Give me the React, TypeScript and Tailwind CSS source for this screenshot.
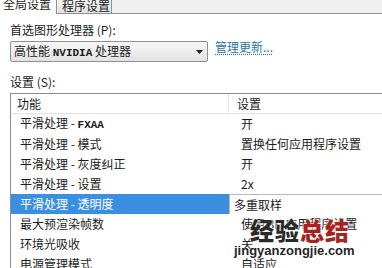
const CJK = "font-['Noto_Sans_CJK_SC','Noto_Sans',sans-serif]";

interface SettingRow {
  name: string;
  latin?: string;
  value: string;
}

const ROWS: SettingRow[] = [
  { name: "平滑处理 - ", latin: "FXAA", value: "开" },
  { name: "平滑处理 - 模式", value: "置换任何应用程序设置" },
  { name: "平滑处理 - 灰度纠正", value: "开" },
  { name: "平滑处理 - 设置", value: "2x" },
  { name: "平滑处理 - 透明度", value: "多重取样" },
  { name: "最大预渲染帧数", value: "使用 3D 应用程序设置" },
  { name: "环境光吸收", value: "关" },
  { name: "电源管理模式", value: "自适应" },
];

const SELECTED = 4;

function Tabs() {
  return (
    <div className="flex h-[14px] items-stretch bg-[#f0f0f0]">
      <div className="w-[56px] overflow-hidden bg-white pl-[3px] leading-[12px] -mt-[2px]">全局设置</div>
      <div className="w-[56px] overflow-hidden border-x border-b border-[#8e9196] bg-gradient-to-b from-[#f4f4f4] to-[#e2e2e2] pl-[5px] leading-[12px]">
        程序设置
      </div>
      <div className="flex-1 border-b border-[#8e9196]" />
    </div>
  );
}

function Dropdown() {
  return (
    <div className="flex items-start gap-[7px]">
      <div className="flex h-[21px] w-[198px] items-center justify-between rounded-[2px] border border-[#8d8f94] bg-gradient-to-b from-[#f6f6f6] to-[#e3e3e3] pl-[3px] pr-[4px]">
        <span>
          高性能 <span className="font-['Liberation_Mono',monospace] text-[11px] font-bold">NVIDIA</span> 处理器
        </span>
        <svg width="7" height="4" viewBox="0 0 7 4">
          <path d="M0 0h7L3.5 4z" fill="#222" />
        </svg>
      </div>
      <a className="mt-[-1px] text-[#2a78a6] underline decoration-dotted underline-offset-[2px] leading-[14px]">管理更新...</a>
    </div>
  );
}

function SettingsList() {
  return (
    <div className="border-l border-t border-[#8a8e96]">
      <div className="flex h-[20px] items-center border-b border-[#e3e3e3]">
        <div className="flex h-full w-[218px] items-center border-r border-[#e3e3e3] pl-[6px]">功能</div>
        <div className="pl-[8px]">设置</div>
      </div>
      {ROWS.map((r, i) => {
        const sel = i === SELECTED;
        return (
          <div key={r.name} className="flex h-[20px] items-center">
            <div
              className={
                sel
                  ? "flex h-full w-[218px] items-center bg-[#3b8fe0] pl-[9px] text-white"
                  : "flex h-full w-[218px] items-center pl-[9px]"
              }
            >
              <span className="whitespace-pre">
                {r.name}
                {r.latin && <span className="font-['Liberation_Mono',monospace] text-[11px] font-bold">{r.latin}</span>}
              </span>
            </div>
            {sel ? (
              <div className="flex h-full flex-1 items-center border-l border-t border-[#b9b9b9] bg-white pl-[4px]">{r.value}</div>
            ) : (
              <div className="pl-[12px]">{r.value}</div>
            )}
          </div>
        );
      })}
    </div>
  );
}

export default function App() {
  return (
    <div className={`relative h-[268px] w-[382px] overflow-hidden bg-white text-[12px] text-[#1c1c1c] ${CJK}`}>
      <Tabs />
      <div className="pl-[10px]">
        <p className="mt-[8px] leading-[16px]">首选图形处理器 (P):</p>
        <div className="mt-[3px]">
          <Dropdown />
        </div>
        <p className="mt-[12px] leading-[16px]">设置 (S):</p>
        <div className="mt-[3px]">
          <SettingsList />
        </div>
      </div>

      {/* watermark */}
      <div className="absolute left-[250px] top-[216px] text-[24px] font-black leading-[28px] tracking-[1px] [text-shadow:0_0_2px_#fff,0_0_2px_#fff]">
        <span className="text-[#2a2a2a]">经验</span>
        <span className="text-[#a8231c]">总结</span>
      </div>
      <div className="absolute left-[234px] top-[243px] font-['Liberation_Sans',sans-serif] text-[13px] font-bold leading-[15px] text-[#262626] [text-shadow:0_0_2px_#fff]">
        jingyanzongjie.com
      </div>
    </div>
  );
}
